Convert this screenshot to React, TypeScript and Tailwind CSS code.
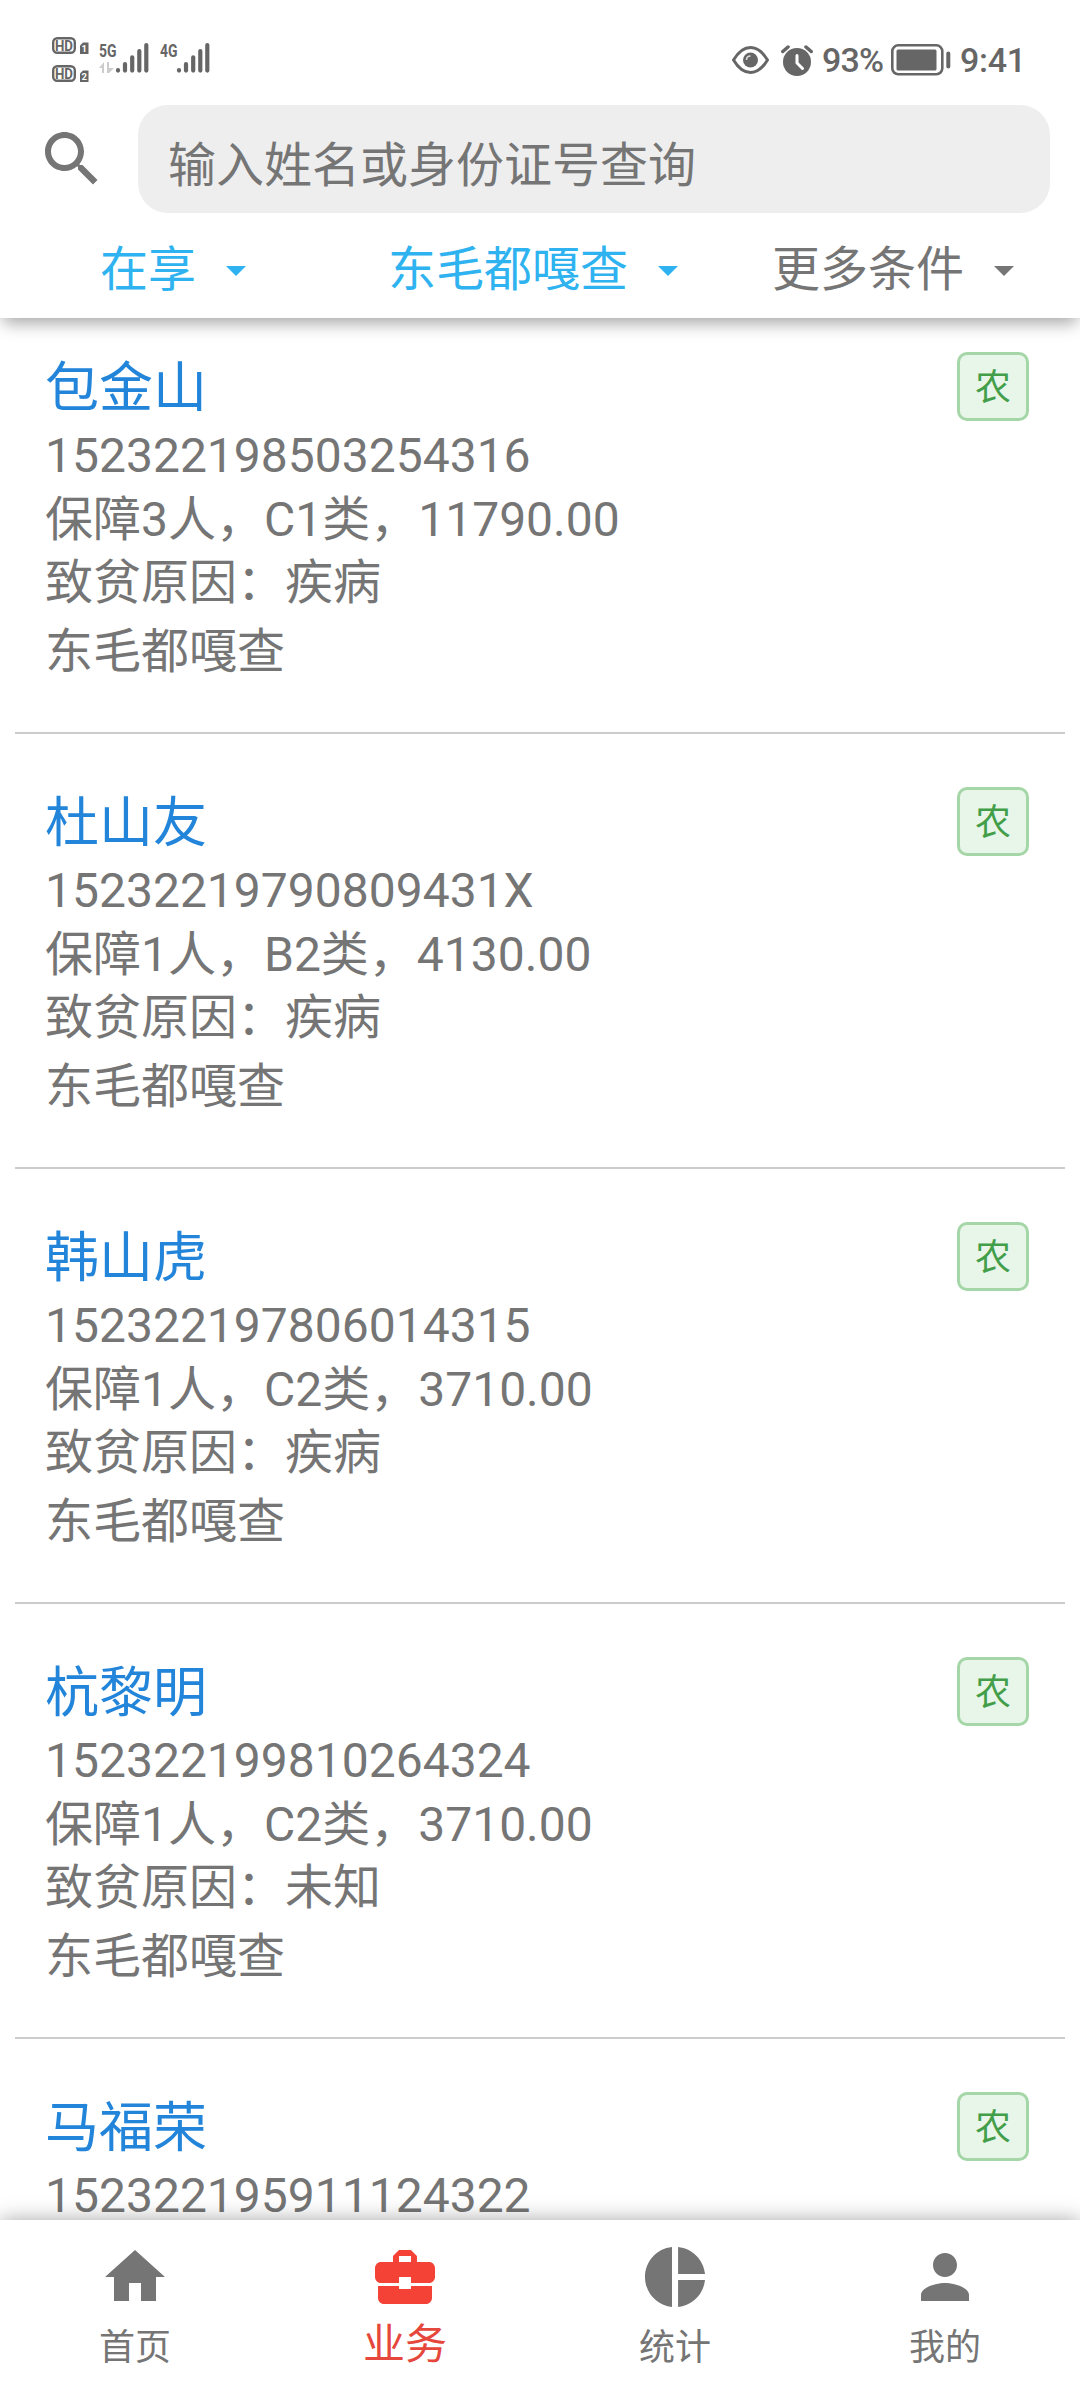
import React from 'react';

interface Household {
  name: string;
  idNumber: string;
  summary: string;
  reason: string;
  village: string;
  tag: string;
}

const households: Household[] = [
  {
    name: '包金山',
    idNumber: '152322198503254316',
    summary: '保障3人，C1类，11790.00',
    reason: '疾病',
    village: '东毛都嘎查',
    tag: '农',
  },
  {
    name: '杜山友',
    idNumber: '15232219790809431X',
    summary: '保障1人，B2类，4130.00',
    reason: '疾病',
    village: '东毛都嘎查',
    tag: '农',
  },
  {
    name: '韩山虎',
    idNumber: '152322197806014315',
    summary: '保障1人，C2类，3710.00',
    reason: '疾病',
    village: '东毛都嘎查',
    tag: '农',
  },
  {
    name: '杭黎明',
    idNumber: '152322199810264324',
    summary: '保障1人，C2类，3710.00',
    reason: '未知',
    village: '东毛都嘎查',
    tag: '农',
  },
  {
    name: '马福荣',
    idNumber: '152322195911124322',
    summary: '',
    reason: '',
    village: '',
    tag: '农',
  },
];

const filters = [
  { label: '在享', active: true },
  { label: '东毛都嘎查', active: true },
  { label: '更多条件', active: false },
];

const tabs = [
  { label: '首页', active: false, path: 'M10 20v-6h4v6h5v-8h3L12 3 2 12h3v8z' },
  {
    label: '业务',
    active: true,
    path: 'M10 16v-1H3.01L3 19c0 1.11.89 2 2 2h14c1.11 0 2-.89 2-2v-4h-7v1h-4zm10-9h-4.01V5l-2-2h-4l-2 2v2H4c-1.1 0-2 .9-2 2v3c0 1.11.89 2 2 2h6v-2h4v2h6c1.1 0 2-.9 2-2V9c0-1.1-.9-2-2-2zm-6 0h-4V5h4v2z',
  },
  {
    label: '统计',
    active: false,
    path: 'M11 2v20c-5.07-.5-9-4.79-9-10s3.93-9.5 9-10zm2.03 0v8.99H22c-.47-4.74-4.24-8.52-8.97-8.99zm0 11.01V22c4.74-.47 8.5-4.25 8.97-8.99h-8.97z',
  },
  {
    label: '我的',
    active: false,
    path: 'M12 12c2.21 0 4-1.79 4-4s-1.79-4-4-4-4 1.79-4 4 1.79 4 4 4zm0 2c-2.67 0-8 1.34-8 4v2h16v-2c0-2.66-5.33-4-8-4z',
  },
];

const Icon = ({ path, className }: { path: string; className: string }) => (
  <svg viewBox="0 0 24 24" fill="currentColor" className={className}>
    <path d={path} />
  </svg>
);

const HdBadge = ({ sim }: { sim: number }) => (
  <svg viewBox="0 0 37 17" className="block h-[17px] w-[37px] overflow-visible">
    <rect x="1.2" y="1.2" width="21.600" height="14.600" rx="4" fill="none" stroke="#666" strokeWidth="2.400" />
    <text
      x="3"
      y="13.500"
      textLength="18"
      lengthAdjust="spacingAndGlyphs"
      className="text-[14px] font-bold"
      fill="#666"
    >
      HD
    </text>
    <path d="M28 8.500l3-3h5.500V17H28z" fill="#666" />
    <text x="32.300" y="15.300" textAnchor="middle" className="text-[9.500px] font-bold" fill="#fff">
      {sim}
    </text>
  </svg>
);

const Signal = ({ label, traffic }: { label: string; traffic?: boolean }) => (
  <svg viewBox="0 0 51 32" className="block h-8 w-[51px] overflow-visible">
    <text
      x="0"
      y="14.800"
      textLength="17.500"
      lengthAdjust="spacingAndGlyphs"
      className="text-[18px] font-bold"
      fill="#666"
    >
      {label}
    </text>
    {traffic && <path d="M5 20v11H3v-5H0zM8 20h2v6h5l-5 5H8z" fill="#ccc" />}
    <g stroke="#666" strokeWidth="4.200" strokeLinecap="round">
      <path d="M19 28v.6" />
      <path d="M26 22v6.600" />
      <path d="M33.200 15.300v13.300" />
      <path d="M40.300 9v19.600" />
      <path d="M47.300 3v25.600" />
    </g>
  </svg>
);

const StatusBar = () => (
  <div className="flex h-[105px] items-start justify-between pt-9 pr-[58px] pl-[52px] text-[#666]">
    <div className="flex">
      <div className="flex flex-col gap-[11px] pt-px">
        <HdBadge sim={1} />
        <HdBadge sim={2} />
      </div>
      <div className="flex gap-[10px] pt-[6px] pl-[10px]">
        <Signal label="5G" traffic />
        <Signal label="4G" />
      </div>
    </div>
    <div className="flex h-[48px] items-center">
      <svg viewBox="0 0 37 28" className="h-7 w-[37px]">
        <path
          d="M1.500 14Q9 1.500 18.500 1.500T35.500 14Q28 26.500 18.500 26.500T1.500 14z"
          fill="none"
          stroke="#666"
          strokeWidth="3"
          strokeLinejoin="round"
        />
        <circle cx="18.500" cy="14" r="7.500" fill="#666" />
        <path d="M14.500 14q0-4 4-4" fill="none" stroke="#ddd" strokeWidth="1.500" />
      </svg>
      <svg viewBox="0 0 32 31" className="ml-3 h-[31px] w-8">
        <circle cx="16" cy="17" r="14" fill="#666" />
        <path d="M1.800 6.500L7 2M30.200 6.500L25 2" stroke="#666" strokeWidth="3.500" strokeLinecap="round" />
        <path d="M16 10.500v7.500l5.500 5.500" fill="none" stroke="#fff" strokeWidth="3" strokeLinecap="round" />
      </svg>
      <span className="ml-[9px] w-[61px] text-[34px] leading-none font-medium tracking-[-0.8px]">93%</span>
      <svg viewBox="0 0 60 32" className="ml-2 h-8 w-[60px]">
        <rect x="1.300" y="1.300" width="50" height="29" rx="6" fill="none" stroke="#666" strokeWidth="2.600" />
        <rect x="5.500" y="5.500" width="40" height="21" rx="1.500" fill="#666" />
        <path d="M57.300 9.500v13" stroke="#666" strokeWidth="4" strokeLinecap="round" />
      </svg>
      <span className="ml-[9px] w-[62px] text-[34px] leading-none font-medium tracking-[-0.3px]">9:41</span>
    </div>
  </div>
);

const Header = () => (
  <header className="relative z-10 h-[318px] shrink-0 bg-white shadow-[0_8px_16px_-3px_rgba(0,0,0,0.36)]">
    <StatusBar />
    <div className="flex h-[108px] pr-[30px] pl-9">
      <Icon
        path="M15.500 14h-.79l-.28-.27C15.410 12.590 16 11.110 16 9.500 16 5.910 13.090 3 9.500 3S3 5.910 3 9.500 5.910 16 9.500 16c1.610 0 3.090-.59 4.230-1.570l.27.28v.79l5 4.990L20.490 19l-4.990-5zm-6 0C7.010 14 5 11.990 5 9.500S7.010 5 9.500 5 14 7.010 14 9.500 11.990 14 9.500 14z"
        className="mt-[18px] size-[72px] text-[#757575]"
      />
      <div className="ml-[30px] flex flex-1 items-center rounded-[30px] bg-[#eee] px-[30px] pt-[13px] text-[48px] leading-none text-[#757575]">
        输入姓名或身份证号查询
      </div>
    </div>
    <div className="grid h-[105px] grid-cols-3">
      {filters.map(f => (
        <div
          key={f.label}
          className={`flex h-[114px] items-center justify-center gap-4 ${f.active ? 'text-[#2fb3f0]' : 'text-[#757575]'}`}
        >
          <span className="text-[48px] leading-none">{f.label}</span>
          <Icon path="M7 10l5 5 5-5z" className="size-12" />
        </div>
      ))}
    </div>
  </header>
);

const HouseholdItem = ({ item }: { item: Household }) => (
  <li className="flex h-[435px] shrink-0 items-start justify-between border-b-2 border-[#ccc] pt-[53px] pr-9 pl-[30px]">
    <div className="pt-[2px] text-[48px] leading-[63.5px] text-[#757575]">
      <h2 className="h-[70px] text-[54px] leading-[70px] text-[#2285da]">{item.name}</h2>
      <p>{item.idNumber}</p>
      {item.summary && <p>{item.summary}</p>}
      {item.reason && <p>致贫原因：{item.reason}</p>}
      {item.village && <p className="mt-[5px]">{item.village}</p>}
    </div>
    <span className="flex h-[69px] w-[72px] items-center justify-center rounded-[10px] border-3 border-[#a5d6a7] bg-[#e8f5e9] pt-[2px] text-[36px] leading-none text-[#439e49]">
      {item.tag}
    </span>
  </li>
);

const TabBar = () => (
  <nav className="relative z-10 grid h-[168px] shrink-0 grid-cols-4 bg-white shadow-[0_0_20px_rgba(0,0,0,0.35)]">
    {tabs.map(tab => (
      <div
        key={tab.label}
        className={`flex flex-col items-center pt-[21px] ${tab.active ? 'text-[#f44336]' : 'text-[#757575]'}`}
      >
        <Icon path={tab.path} className="size-[72px]" />
        <span
          className={`leading-[48px] ${tab.active ? 'mt-2 text-[42px] text-[#e6473c]' : 'mt-[11px] text-[36px]'}`}
        >
          {tab.label}
        </span>
      </div>
    ))}
  </nav>
);

export default function App() {
  return (
    <div className="flex h-[2388px] w-[1080px] flex-col overflow-hidden bg-white font-[Roboto,'Noto_Sans_CJK_SC',sans-serif]">
      <Header />
      <ul className="-mt-[19px] flex min-h-0 flex-1 flex-col overflow-hidden px-[15px]">
        {households.map(item => (
          <HouseholdItem key={item.idNumber} item={item} />
        ))}
      </ul>
      <TabBar />
    </div>
  );
}
